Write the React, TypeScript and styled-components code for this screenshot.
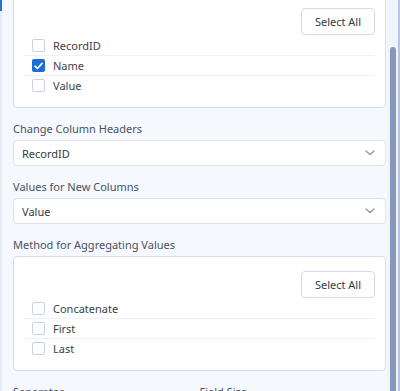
import React from 'react';
import styled, { createGlobalStyle } from 'styled-components';

const GlobalStyle = createGlobalStyle`
  html, body {
    margin: 0;
    padding: 0;
    background: #f5f8fd;
  }
  body {
    font-family: 'Noto Sans', 'Open Sans', sans-serif;
  }
`;

interface Option {
  label: string;
  checked?: boolean;
}

const fieldOptions: Option[] = [
  { label: 'RecordID' },
  { label: 'Name', checked: true },
  { label: 'Value' },
];

const methodOptions: Option[] = [
  { label: 'Concatenate' },
  { label: 'First' },
  { label: 'Last' },
];

const CheckList: React.FC<{ options: Option[]; offsetTop?: number }> = ({
  options,
  offsetTop,
}) => (
  <ListCard $offsetTop={offsetTop}>
    <ButtonRow>
      <SelectAllButton>Select All</SelectAllButton>
    </ButtonRow>
    {options.map((opt) => (
      <CheckRow key={opt.label}>
        <Box $checked={!!opt.checked}>
          {opt.checked && (
            <svg width="9" height="8" viewBox="0 0 9 8">
              <path
                d="M1 4.2 L3.4 6.5 L8 1.4"
                fill="none"
                stroke="#fff"
                strokeWidth="1.6"
                strokeLinecap="round"
                strokeLinejoin="round"
              />
            </svg>
          )}
        </Box>
        <CheckLabel>{opt.label}</CheckLabel>
      </CheckRow>
    ))}
  </ListCard>
);

const Dropdown: React.FC<{ value: string }> = ({ value }) => (
  <SelectBox>
    <span>{value}</span>
    <svg width="10" height="6" viewBox="0 0 10 6">
      <path
        d="M1 1 L5 4.6 L9 1"
        fill="none"
        stroke="#8d9cbc"
        strokeWidth="1.4"
        strokeLinecap="round"
      />
    </svg>
  </SelectBox>
);

const App: React.FC = () => {
  return (
    <>
      <GlobalStyle />
      <Frame>
        <EdgeStrip />
        <Content>
          <CheckList options={fieldOptions} offsetTop={-7} />
          <Section>
            <FieldLabel>Change Column Headers</FieldLabel>
            <Dropdown value="RecordID" />
          </Section>
          <Section>
            <FieldLabel>Values for New Columns</FieldLabel>
            <Dropdown value="Value" />
          </Section>
          <Section>
            <FieldLabel>Method for Aggregating Values</FieldLabel>
            <CheckList options={methodOptions} />
          </Section>
          <BottomGrid>
            <FieldLabel>Separator</FieldLabel>
            <FieldLabel>Field Size</FieldLabel>
          </BottomGrid>
        </Content>
        <Rail>
          <Thumb />
        </Rail>
      </Frame>
    </>
  );
};

const Frame = styled.div`
  display: flex;
  width: 400px;
  height: 391px;
  overflow: hidden;
  background: #f5f8fd;
`;
const EdgeStrip = styled.div`
  width: 2px;
  flex-shrink: 0;
  background: linear-gradient(#2a6fd4 0 11px, #e6ebf3 11px);
  margin-right: 11px;
`;
const Content = styled.div`
  flex: 1;
  display: flex;
  flex-direction: column;
  min-width: 0;
`;
const ListCard = styled.div<{ $offsetTop?: number }>`
  margin-top: ${(p) => p.$offsetTop ?? 0}px;
  background: #fff;
  border: 1px solid #d6dceb;
  border-radius: 4px;
  padding: 14px 10px 12px 10px;
`;
const ButtonRow = styled.div`
  display: flex;
  justify-content: flex-end;
`;
const SelectAllButton = styled.button`
  width: 74px;
  height: 27px;
  background: #fff;
  border: 1px solid #d3d9ea;
  border-radius: 4px;
  font-family: inherit;
  font-size: 11px;
  color: #333a45;
  padding: 0;
  cursor: pointer;
`;
const CheckRow = styled.div`
  box-sizing: border-box;
  display: flex;
  align-items: center;
  height: 20px;
  padding-left: 8px;
  & + & {
    border-top: 1px solid #eef1f7;
  }
`;
const Box = styled.span<{ $checked: boolean }>`
  box-sizing: border-box;
  width: 13px;
  height: 13px;
  border-radius: 2px;
  display: flex;
  align-items: center;
  justify-content: center;
  border: ${(p) => (p.$checked ? 'none' : '1.5px solid #c8d0e3')};
  background: ${(p) => (p.$checked ? '#1d6fd8' : '#fff')};
  margin-right: 8px;
`;
const CheckLabel = styled.span`
  font-size: 11px;
  color: #3a3f48;
`;
const Section = styled.div`
  display: flex;
  flex-direction: column;
  margin-top: 13px;
`;
const FieldLabel = styled.div`
  font-size: 11px;
  line-height: 15px;
  color: #4a5262;
  margin-bottom: 4px;
`;
const SelectBox = styled.div`
  box-sizing: border-box;
  height: 26px;
  display: flex;
  align-items: center;
  justify-content: space-between;
  padding: 0 10px 0 8px;
  background: #fff;
  border: 1px solid #dde2ed;
  border-radius: 4px;
  font-size: 11px;
  color: #333a45;
`;
const BottomGrid = styled.div`
  display: grid;
  grid-template-columns: 1fr 1fr;
  margin-top: 13px;
`;
const Rail = styled.div`
  width: 13px;
  flex-shrink: 0;
  margin-left: 1px;
  background: #f0f4fb;
  border-right: 2px solid #b9c6e3;
  display: flex;
  justify-content: center;
  padding-top: 47px;
  box-sizing: border-box;
`;
const Thumb = styled.div`
  width: 6px;
  height: 400px;
  background: #8797b9;
  border-radius: 3px 3px 0 0;
`;

export default App;
